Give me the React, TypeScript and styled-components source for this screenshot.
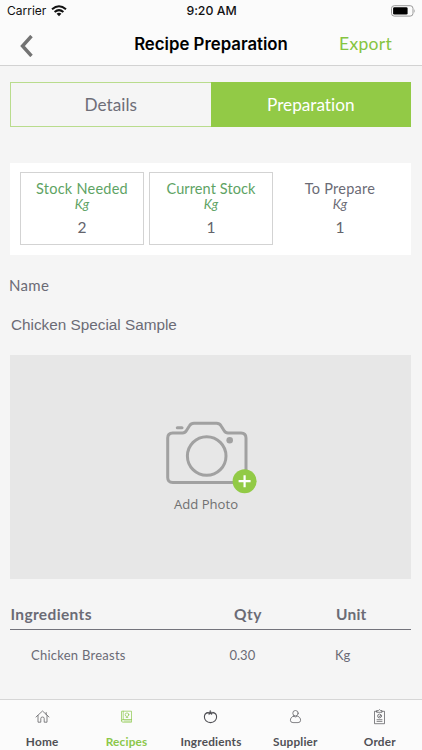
import React from "react";
import styled, { createGlobalStyle } from "styled-components";

const Global = createGlobalStyle`
  * { box-sizing: border-box; }
  body { margin: 0; background: #f5f5f5; font-family: Lato, sans-serif; color: #6b6b75; }
  button { font: inherit; color: inherit; background: none; border: 0; padding: 0; }
`;

type TextProps = { $size: number; $track?: number; $family?: string; $weight?: number; $color?: string; $italic?: boolean; $line?: number };
const Text = styled.span<TextProps>`
  display: block;
  white-space: nowrap;
  font-variant-ligatures: none;
  font-family: ${(p) => p.$family ?? "Lato"}, sans-serif;
  font-size: ${(p) => p.$size}px;
  line-height: ${(p) => p.$line ?? 20}px;
  letter-spacing: ${(p) => p.$track ?? 0}px;
  font-weight: ${(p) => p.$weight ?? 400};
  font-style: ${(p) => (p.$italic ? "italic" : "normal")};
  color: ${(p) => p.$color ?? "inherit"};
`;

const Screen = styled.div`
  width: 422px;
  height: 750px;
  display: flex;
  flex-direction: column;
  overflow: hidden;
  background: #f5f5f5;
`;
const Header = styled.header`
  height: 66px;
  flex: none;
  background: #fbfbfb;
  border-bottom: 1px solid #d2d2d2;
`;
const StatusBar = styled.div`
  height: 22px;
  display: grid;
  grid-template-columns: 1fr auto 1fr;
  align-items: center;
  padding: 0 6px 0 7px;
  color: #111;
`;
const Carrier = styled.div`
  display: flex;
  align-items: center;
  gap: 5px;
`;
const Battery = styled.svg`
  justify-self: end;
`;
const NavBar = styled.div`
  height: 43px;
  display: grid;
  grid-template-columns: 1fr auto 1fr;
  align-items: center;
  padding: 0 30px;
`;
const BackButton = styled.button`
  display: flex;
  justify-self: start;
  margin-left: -11px;
  padding-top: 5px;
`;
const ExportButton = styled.button`
  justify-self: end;
`;
const Main = styled.main`
  flex: 1;
  padding: 16px 11px 0 10px;
`;
const Tabs = styled.div`
  height: 45px;
  display: grid;
  grid-template-columns: 1fr 1fr;
  border: 1px solid #b9dc8d;
`;
const Tab = styled.button<{ $active?: boolean }>`
  display: flex;
  align-items: center;
  justify-content: center;
  margin: ${(p) => (p.$active ? "-1px -1px -1px 0" : "0")};
  background: ${(p) => (p.$active ? "#92ca46" : "transparent")};
  color: ${(p) => (p.$active ? "#fff" : "#6e6e78")};
`;
const StockPanel = styled.section`
  height: 92px;
  margin-top: 36px;
  padding: 9px 10px 10px;
  background: #fff;
  display: grid;
  grid-template-columns: 124px 124px 124px;
  gap: 5px;
`;
const StockCard = styled.div<{ $boxed?: boolean }>`
  display: flex;
  flex-direction: column;
  align-items: center;
  padding-top: 7px;
  border: 1px solid ${(p) => (p.$boxed ? "#d3d3d3" : "transparent")};
  color: ${(p) => (p.$boxed ? "#5ea364" : "#6b6b75")};
`;
const NameField = styled.section`
  display: flex;
  flex-direction: column;
  gap: 20px;
  padding: 20px 0 0 1px;
  height: 100px;
`;
const NameLabel = styled.div`
  margin-left: -2px;
`;
const PhotoBox = styled.button`
  width: 100%;
  height: 224px;
  background: #e7e7e7;
  display: flex;
  flex-direction: column;
  align-items: center;
  padding: 65px 0 0 0;
`;
const PhotoCaption = styled.div`
  margin: -1px 9px 0 0;
`;
const Table = styled.section`
  margin-top: 25px;
`;
const TableRow = styled.div<{ $head?: boolean }>`
  display: grid;
  grid-template-columns: ${(p) => (p.$head ? "223.5px 102px 1fr" : "198.5px 105.5px 1fr")};
  padding-left: ${(p) => (p.$head ? 0.5 : 21)}px;
  padding-top: ${(p) => (p.$head ? 0 : 15)}px;
  height: ${(p) => (p.$head ? 26 : 40)}px;
  border-bottom: ${(p) => (p.$head ? "1px solid #73737b" : "0")};
`;
const TabBar = styled.nav`
  height: 51px;
  flex: none;
  background: #fbfbfb;
  border-top: 1px solid #d6d6d6;
  display: grid;
  grid-template-columns: repeat(5, 1fr);
`;
const TabItem = styled.button<{ $active?: boolean }>`
  display: flex;
  flex-direction: column;
  align-items: center;
  justify-content: flex-start;
  padding-top: 8px;
  gap: 7px;
  color: ${(p) => (p.$active ? "#8bc74a" : "#505055")};
`;
const Glyph = styled.svg`
  display: block;
  fill: none;
  stroke: currentColor;
  stroke-width: 0.7;
  stroke-linejoin: round;
  stroke-linecap: round;
`;

const icons = {
  Home: <path d="M2 9 8.5 3 15 9M4 7.5V14.2H6.8V10.5Q6.8 9 8.5 9T10.2 10.5V14.2H13V7.5M12.2 4.5V6.5" />,
  Recipes: (
    <>
      <path d="M4 3.2H13.5V14.2H5Q3.5 14.2 3.5 12.8V3.8ZM3.5 12.8Q3.5 11.5 5 11.5H13.5M5.2 3.2V11.5M6 13H12.5" />
      <circle cx="9" cy="6.7" r="1.8" />
      <path d="M8.2 9.5H9.8" />
    </>
  ),
  Ingredients: (
    <>
      <path strokeWidth="1.1" d="M6 4.6C3.8 4.9 2.4 6.7 2.4 9C2.4 12 4.8 14.6 8.5 14.6S14.6 12 14.6 9C14.6 6.7 13.2 4.9 11 4.6" />
      <path fill="currentColor" strokeWidth=".4" d="M4.8 4.6 7.5 4.3 8.2 2.2 9.1 4.2 12.2 4.4 10 5.5 9.8 6.7 8.3 5.7 6.8 6.7 6.8 5.4Z" />
    </>
  ),
  Supplier: (
    <>
      <circle cx="8.5" cy="5.2" r="2.7" />
      <path d="M6.3 8.2C4.4 8.9 3.4 10.5 3.4 12.3Q3.4 14.6 6 14.6H11Q13.6 14.6 13.6 12.3C13.6 10.5 12.6 8.9 10.7 8.2Q8.5 9.8 6.3 8.2Z" />
    </>
  ),
  Order: (
    <>
      <path d="M6 3.3H3.5V15.7H13.5V3.3H11M6 2.6H7.3Q8.5 .6 9.7 2.6H11V4.3H6Z" />
      <circle cx="8.5" cy="8" r="1.9" />
      <path d="M7.7 8 8.4 8.7 9.5 7.3M6 11.7H11M6 13.4H11" />
    </>
  ),
};

const stock = [
  { label: "Stock Needed", value: "2", boxed: true, track: 0.25 },
  { label: "Current Stock", value: "1", boxed: true, track: 0.1 },
  { label: "To Prepare", value: "1", boxed: false, track: 0.25 },
];

export default function App() {
  return (
    <Screen>
      <Global />
      <Header>
        <StatusBar>
          <Carrier>
            <Text $size={12} $family="Inter">Carrier</Text>
            <svg width="16" height="12" viewBox="0 0 16 12" fill="none" stroke="#111" strokeWidth="2">
              <path d="M1 4.3Q8-1.7 15 4.3M3.6 7Q8 3.2 12.4 7" />
              <path d="M5.6 8.7Q8 6.9 10.4 8.7L8 11.2Z" fill="#111" stroke="none" />
            </svg>
          </Carrier>
          <Text $size={12.3} $family="Inter" $weight={500}>9:20 AM</Text>
          <Battery width="26" height="12" viewBox="0 0 26 12">
            <rect x="1.5" y=".7" width="21.5" height="10.4" rx="2.8" fill="none" stroke="#999" />
            <rect x="3.1" y="2.2" width="14.5" height="7.4" rx="1.3" fill="#000" />
            <path d="M24.3 4Q25.8 6 24.3 8Z" fill="#999" />
          </Battery>
        </StatusBar>
        <NavBar>
          <BackButton aria-label="Back">
            <svg width="14" height="22" viewBox="0 0 14 22" fill="none" stroke="#737373" strokeWidth="3.4">
              <path d="M12.5 1 3.5 11 12.5 21" />
            </svg>
          </BackButton>
          <Text $size={16.8} $family="Inter" $weight={600} $color="#000" $line={18}>Recipe Preparation</Text>
          <ExportButton>
            <Text $size={17.5} $color="#85c441" $track={0.3} $line={20}>Export</Text>
          </ExportButton>
        </NavBar>
      </Header>
      <Main>
        <Tabs>
          <Tab><Text $size={17.2}>Details</Text></Tab>
          <Tab $active><Text $size={17.2}>Preparation</Text></Tab>
        </Tabs>
        <StockPanel>
          {stock.map((s) => (
            <StockCard key={s.label} $boxed={s.boxed}>
              <Text $size={14.5} $track={s.track} $line={17}>{s.label}</Text>
              <Text $size={13.2} $italic $line={15}>Kg</Text>
              <Text $size={15.5} $line={31} $color="#64646c">{s.value}</Text>
            </StockCard>
          ))}
        </StockPanel>
        <NameField>
          <NameLabel><Text $size={15} $track={0.3}>Name</Text></NameLabel>
          <Text $size={15.3} $family="Liberation Sans">Chicken Special Sample</Text>
        </NameField>
        <PhotoBox>
          <svg width="102" height="75" viewBox="0 0 102 75" fill="none" stroke="#a1a1a1" strokeWidth="3">
            <path d="M12.7 13H22.5Q25 13 26.5 10.5L29.5 5.8Q31 3.3 34 3.3H56.5Q59.5 3.3 61 5.8L64 10.5Q65.5 13 68 13H81Q86 13 86 18V57.5Q86 62.5 81 62.5H12.7Q7.7 62.5 7.7 57.5V18Q7.7 13 12.7 13Z" />
            <path d="M17.3 7.8H22" strokeLinecap="round" />
            <circle cx="46.7" cy="36" r="19.3" />
            <circle cx="69.7" cy="20.2" r="3.3" fill="#a1a1a1" stroke="none" />
            <circle cx="84.6" cy="61.2" r="12" fill="#92ca46" stroke="none" />
            <path d="M78.6 61.2H90.6M84.6 55.2V67.2" stroke="#fff" strokeWidth="2.2" />
          </svg>
          <PhotoCaption>
            <Text $size={13.1} $family="Open Sans" $color="#707070">Add Photo</Text>
          </PhotoCaption>
        </PhotoBox>
        <Table>
          <TableRow $head>
            <Text $size={15.5} $track={0.35} $weight={700}>Ingredients</Text>
            <Text $size={15.5} $track={0.5} $weight={700}>Qty</Text>
            <Text $size={15.5} $track={0.2} $weight={700}>Unit</Text>
          </TableRow>
          <TableRow>
            <Text $size={13} $track={0.25}>Chicken Breasts</Text>
            <Text $size={13}>0.30</Text>
            <Text $size={13}>Kg</Text>
          </TableRow>
        </Table>
      </Main>
      <TabBar>
        {Object.entries(icons).map(([name, icon]) => (
          <TabItem key={name} $active={name === "Recipes"}>
            <Glyph width="17" height="17" viewBox="0 0 17 17">{icon}</Glyph>
            <Text $size={11.8} $track={0.2} $weight={700} $line={19}>{name}</Text>
          </TabItem>
        ))}
      </TabBar>
    </Screen>
  );
}
